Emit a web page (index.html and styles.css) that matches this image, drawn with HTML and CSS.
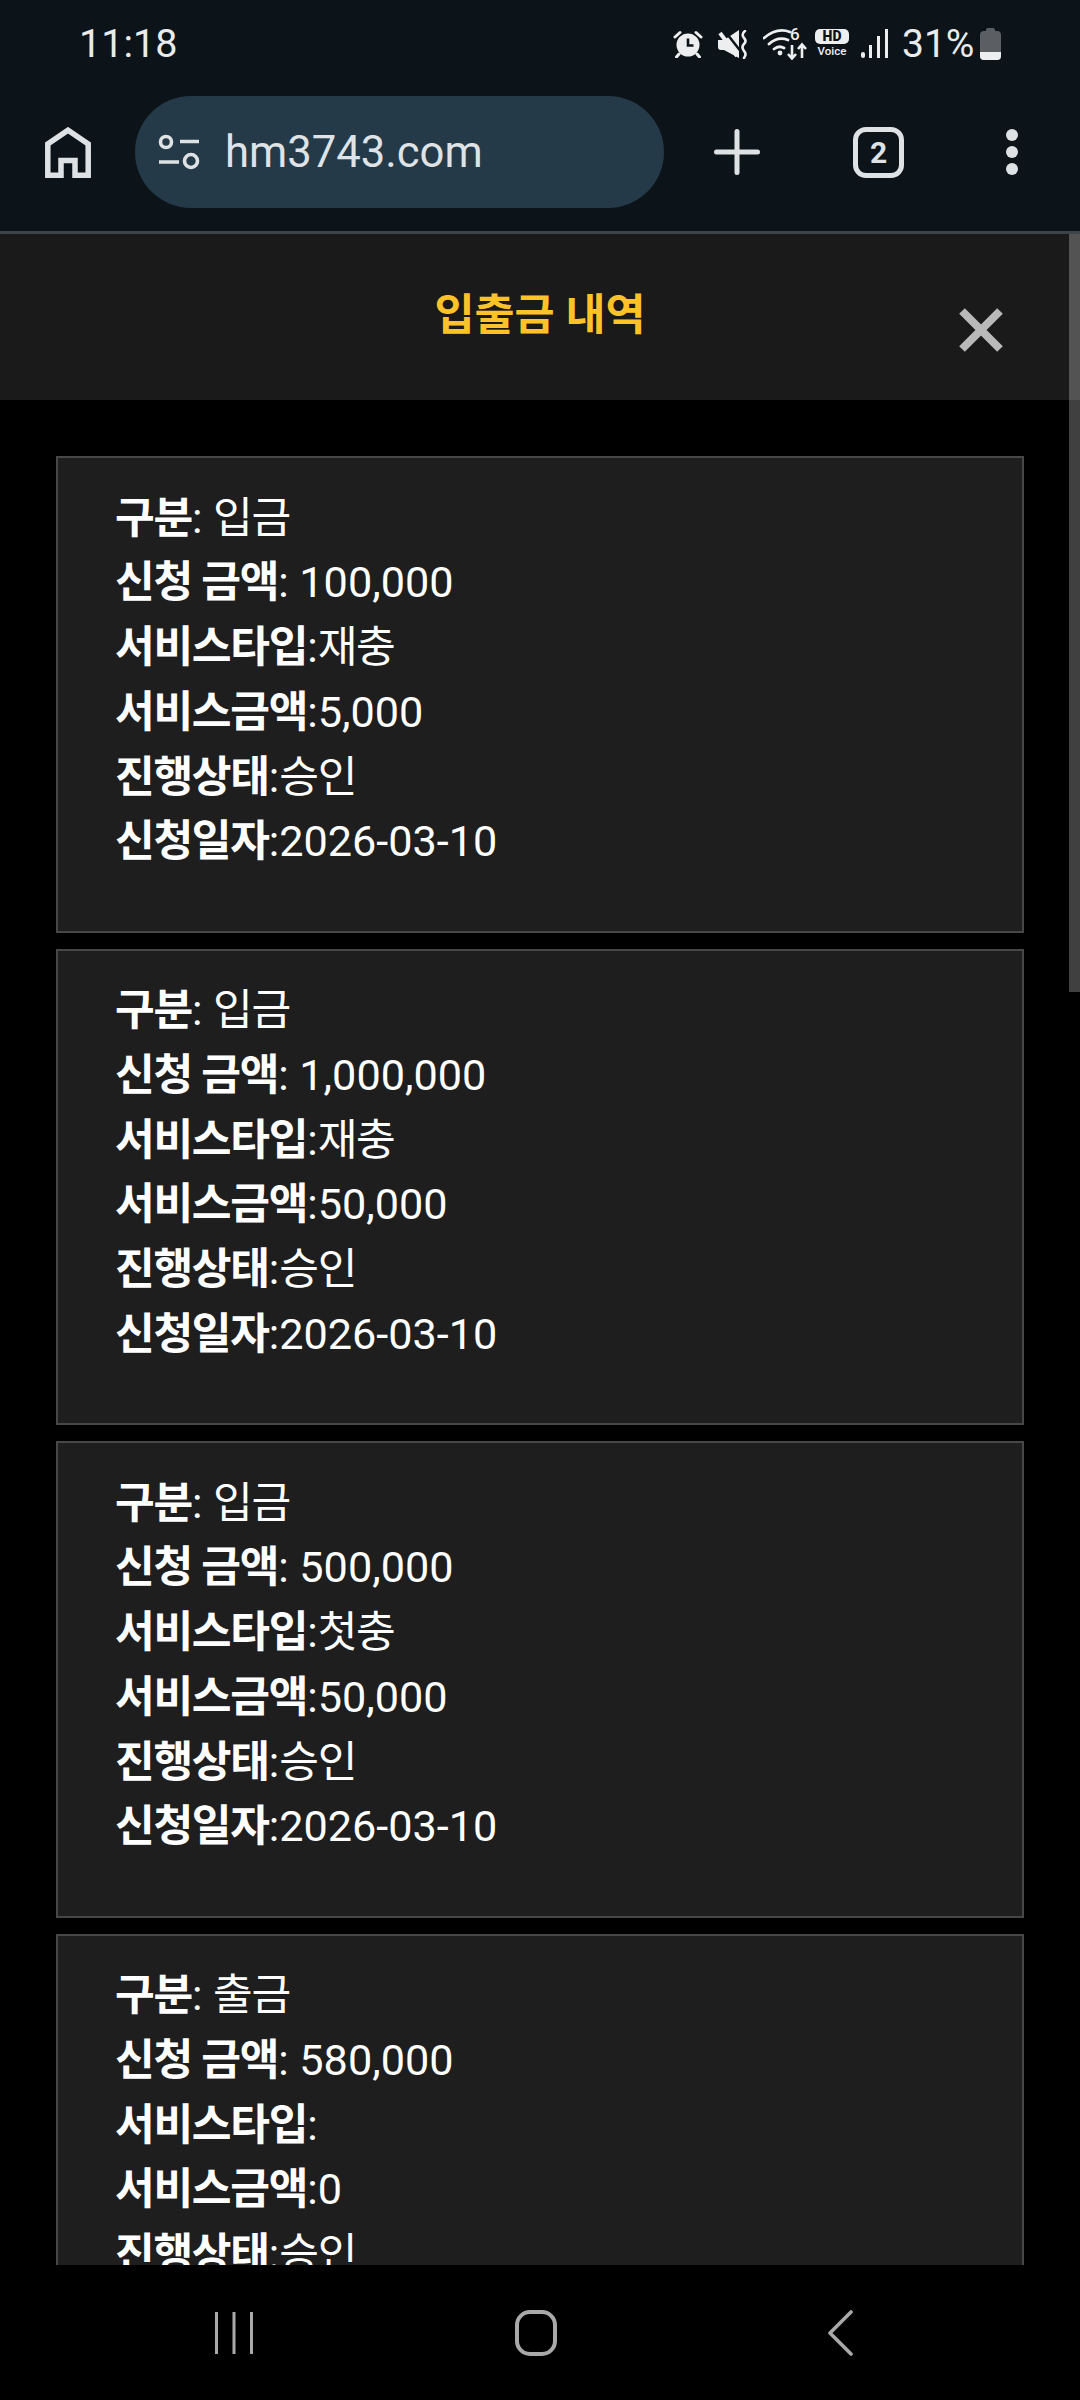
FILE: index.html
```html
<!DOCTYPE html>
<html lang="ko">
<head>
    <meta charset="UTF-8">
    <title>입출금 내역</title>
    <link rel="stylesheet" href="styles.css">
</head>
<body>
    <div class="phone">
        <div class="chrome">
            <div class="status-bar">
                <span class="clock">11:18</span>
                <div class="status-icons">
                    <svg class="ic-alarm" width="30" height="28" viewBox="0 0 30 28">
                        <path d="M2 7 L7 2.5 M23 2.5 L28 7" stroke="#eceeef" stroke-width="3" stroke-linecap="round" fill="none"/>
                        <circle cx="15" cy="15" r="11.5" fill="#eceeef"/>
                        <path d="M15 8.5 V15.5 H20.5" stroke="#0d1419" stroke-width="2.6" fill="none"/>
                        <path d="M6 24 L3.5 27 M24 24 L26.5 27" stroke="#eceeef" stroke-width="3" stroke-linecap="round"/>
                    </svg>
                    <svg class="ic-mute" width="31" height="29" viewBox="0 0 31 29">
                        <path d="M0 10 H6 L21 0 V28 L6 20 H3 Q0 20 0 17 Z" fill="#eceeef"/>
                        <path d="M6 0 L24 23" stroke="#0d1419" stroke-width="2.5"/>
                        <path d="M2 3 L19 26" stroke="#eceeef" stroke-width="4"/>
                        <path d="M27 1 Q23 4 26 8 Q29 11 26 14 Q23 17 26 21 Q29 24 26 28" stroke="#eceeef" stroke-width="2.6" fill="none" stroke-linecap="round"/>
                    </svg>
                    <svg class="ic-wifi" width="45" height="32" viewBox="0 0 45 32">
                        <path d="M1 10 Q14 -1 27 4 M6 16 Q15 8 25 12 M11 21 Q16 17 21 20" stroke="#eceeef" stroke-width="2.8" fill="none" stroke-linecap="round"/>
                        <circle cx="17" cy="25" r="2.4" fill="#eceeef"/>
                        <text x="27" y="12" class="wifi-six">6</text>
                        <path d="M29 17 V30 M25 26 L29 30.5 L33 26 M39 30 V17 M35 21 L39 16.5 L43 21" stroke="#eceeef" stroke-width="2.6" fill="none"/>
                    </svg>
                    <div class="hd-voice">
                        <span class="hd">HD</span>
                        <span class="voice">Voice</span>
                    </div>
                    <svg class="ic-signal" width="27" height="30" viewBox="0 0 27 30">
                        <rect x="0" y="23" width="4" height="6" rx="2" fill="#eceeef"/>
                        <rect x="8" y="16" width="3" height="13" fill="#eceeef"/>
                        <rect x="16" y="7" width="3" height="22" fill="#eceeef"/>
                        <rect x="24" y="0" width="3" height="29" fill="#eceeef"/>
                    </svg>
                    <span class="battery-text">31%</span>
                    <div class="battery"><div class="battery-fill"></div></div>
                </div>
            </div>
            <div class="toolbar">
                <svg class="ic-home" width="46" height="51" viewBox="0 0 46 51">
                    <path d="M2.8 48.2 V17 L23 3.2 L43.2 17 V48.2 H30 V33.5 H16 V48.2 Z" stroke="#dfe2e4" stroke-width="5.5" fill="none"/>
                </svg>
                <div class="url-pill">
                    <svg class="ic-tune" width="42" height="36" viewBox="0 0 42 36">
                        <circle cx="8" cy="8" r="5.5" stroke="#dfe2e4" stroke-width="3.6" fill="none"/>
                        <path d="M22 7.5 H41 M1 28 H21" stroke="#dfe2e4" stroke-width="3.6"/>
                        <circle cx="33" cy="27" r="6.5" stroke="#dfe2e4" stroke-width="3.6" fill="none"/>
                    </svg>
                    <span class="url">hm3743.com</span>
                </div>
                <svg class="ic-plus" width="46" height="46" viewBox="0 0 46 46">
                    <path d="M23 2.5 V43.5 M2.5 23 H43.5" stroke="#dfe2e4" stroke-width="5" stroke-linecap="round"/>
                </svg>
                <div class="tabs">2</div>
                <div class="more"><i></i><i></i><i></i></div>
            </div>
        </div>

        <div class="viewport">
            <div class="modal-header">
                <h1>입출금 내역</h1>
                <svg class="ic-close" width="44" height="44" viewBox="0 0 44 44">
                    <path d="M3 3 L41 41 M41 3 L3 41" stroke="#b9b9b9" stroke-width="8"/>
                </svg>
            </div>
            <div class="list">
                <div class="card">
                    <div><strong>구분</strong>: <span class="ko">입금</span></div>
                    <div><strong>신청 금액</strong>: 100,000</div>
                    <div><strong>서비스타입</strong>:<span class="ko">재충</span></div>
                    <div><strong>서비스금액</strong>:5,000</div>
                    <div><strong>진행상태</strong>:<span class="ko">승인</span></div>
                    <div><strong>신청일자</strong>:2026-03-10</div>
                </div>
                <div class="card">
                    <div><strong>구분</strong>: <span class="ko">입금</span></div>
                    <div><strong>신청 금액</strong>: 1,000,000</div>
                    <div><strong>서비스타입</strong>:<span class="ko">재충</span></div>
                    <div><strong>서비스금액</strong>:50,000</div>
                    <div><strong>진행상태</strong>:<span class="ko">승인</span></div>
                    <div><strong>신청일자</strong>:2026-03-10</div>
                </div>
                <div class="card">
                    <div><strong>구분</strong>: <span class="ko">입금</span></div>
                    <div><strong>신청 금액</strong>: 500,000</div>
                    <div><strong>서비스타입</strong>:<span class="ko">첫충</span></div>
                    <div><strong>서비스금액</strong>:50,000</div>
                    <div><strong>진행상태</strong>:<span class="ko">승인</span></div>
                    <div><strong>신청일자</strong>:2026-03-10</div>
                </div>
                <div class="card">
                    <div><strong>구분</strong>: <span class="ko">출금</span></div>
                    <div><strong>신청 금액</strong>: 580,000</div>
                    <div><strong>서비스타입</strong>:</div>
                    <div><strong>서비스금액</strong>:0</div>
                    <div><strong>진행상태</strong>:<span class="ko">승인</span></div>
                    <div><strong>신청일자</strong>:2026-03-10</div>
                </div>
            </div>
            <div class="scrollbar"></div>
        </div>

        <div class="nav-bar">
            <svg class="nav-recents" width="38" height="44" viewBox="0 0 38 44">
                <path d="M1.5 1 V43 M19 1 V43 M36.5 1 V43" stroke="#a9a9a9" stroke-width="3"/>
            </svg>
            <svg class="nav-home" width="42" height="46" viewBox="0 0 42 46">
                <rect x="2" y="2" width="38" height="42" rx="13" stroke="#a9a9a9" stroke-width="4" fill="none"/>
            </svg>
            <svg width="26" height="46" viewBox="0 0 26 46">
                <path d="M24 2 L3 23 L24 44" stroke="#a9a9a9" stroke-width="3.6" fill="none" stroke-linecap="round" stroke-linejoin="round"/>
            </svg>
        </div>
    </div>
</body>
</html>
```

FILE: styles.css
```css
body {
    margin: 0;
    background-color: #000;
    font-family: Roboto, "Noto Sans CJK KR", sans-serif;
    color: #fff;
}
.phone {
    width: 1080px;
    height: 2400px;
    display: flex;
    flex-direction: column;
    overflow: hidden;
}

/* browser chrome */
.chrome {
    height: 231px;
    background-color: #0d1419;
    border-bottom: 3px solid #3d454b;
    flex-shrink: 0;
}
.status-bar {
    height: 80px;
    padding: 17px 0 0 79px;
    box-sizing: border-box;
    display: flex;
    align-items: flex-start;
    justify-content: space-between;
}
.clock {
    font-size: 39.5px;
    line-height: 54px;
    color: #e9ebec;
}
.status-icons {
    display: flex;
    align-items: center;
    height: 54px;
    width: 407px;
}
.ic-alarm { margin-right: 15px; }
.ic-mute { margin-right: 14px; }
.ic-wifi { margin-right: 7px; }
.wifi-six {
    font-family: Roboto, sans-serif;
    font-size: 17px;
    font-weight: 500;
    fill: #eceeef;
}
.hd-voice {
    width: 34px;
    margin-right: 12px;
    display: flex;
    flex-direction: column;
    align-items: center;
}
.hd {
    width: 34px;
    height: 15px;
    border-radius: 5px;
    background-color: #eceeef;
    color: #0d1419;
    font-size: 14px;
    font-weight: 900;
    line-height: 15px;
    text-align: center;
}
.voice {
    font-size: 11.5px;
    font-weight: 500;
    line-height: 15px;
    color: #eceeef;
}
.ic-signal { margin-right: 14px; }
.battery-text {
    font-size: 39px;
    color: #e9ebec;
    width: 78px;
}
.battery {
    width: 21px;
    height: 29px;
    margin-top: 2px;
    border-radius: 4px;
    background-color: #5b5f63;
    position: relative;
    display: flex;
    align-items: flex-end;
    overflow: visible;
}
.battery::before {
    content: "";
    position: absolute;
    top: -3px;
    left: 6px;
    width: 9px;
    height: 4px;
    border-radius: 2px 2px 0 0;
    background-color: #5b5f63;
}
.battery-fill {
    width: 100%;
    height: 8px;
    border-radius: 0 0 4px 4px;
    background-color: #eceeef;
}
.toolbar {
    display: flex;
    align-items: center;
    height: 112px;
    margin-top: 16px;
    padding-left: 45px;
}
.ic-home { margin-right: 44px; }
.url-pill {
    width: 529px;
    height: 112px;
    border-radius: 56px;
    background-color: #243a48;
    display: flex;
    align-items: center;
    padding-left: 23px;
    box-sizing: border-box;
    margin-right: 50px;
}
.ic-tune { margin-right: 25px; }
.url {
    font-size: 43.6px;
    color: #dfe3e6;
}
.ic-plus { margin-right: 93px; }
.tabs {
    width: 51px;
    height: 51px;
    box-sizing: border-box;
    border: 5px solid #dfe2e4;
    border-radius: 13px;
    font-size: 30px;
    font-weight: 700;
    line-height: 41px;
    text-align: center;
    color: #dfe2e4;
    margin-right: 102px;
}
.more {
    display: flex;
    flex-direction: column;
    gap: 5px;
}
.more i {
    display: block;
    width: 12px;
    height: 12px;
    border-radius: 50%;
    background-color: #dfe2e4;
}

/* page */
.viewport {
    flex: 1;
    min-height: 0;
    overflow: hidden;
    position: relative;
    background-color: #000;
}
.scrollbar {
    position: absolute;
    top: 0;
    right: 0;
    width: 11px;
    height: 758px;
    background-color: rgba(255, 255, 255, 0.25);
}
.modal-header {
    height: 166px;
    background-color: #1a1a1a;
    position: relative;
    display: flex;
    justify-content: center;
}
.modal-header h1 {
    margin: 0;
    font-size: 43.5px;
    font-weight: 700;
    color: #ffc229;
    line-height: 164px;
}
.ic-close {
    position: absolute;
    top: 74px;
    right: 77px;
}
.list {
    padding: 56px 56px 0;
    display: flex;
    flex-direction: column;
    gap: 16px;
}
.card {
    height: 476.5px;
    box-sizing: border-box;
    flex-shrink: 0;
    padding: 28.5px 57px 0;
    background-color: #1e1e1e;
    border: 2px solid #474747;
    font-size: 43.2px;
    line-height: 64.8px;
}
.card strong {
    font-weight: 700;
    letter-spacing: -1.3px;
}
.ko {
    letter-spacing: -1.3px;
}

/* system nav */
.nav-bar {
    height: 135px;
    flex-shrink: 0;
    background-color: #000;
    display: flex;
    align-items: center;
    padding-left: 215px;
    box-sizing: border-box;
}
.nav-recents { margin-right: 262px; }
.nav-home { margin-right: 270px; }
```
